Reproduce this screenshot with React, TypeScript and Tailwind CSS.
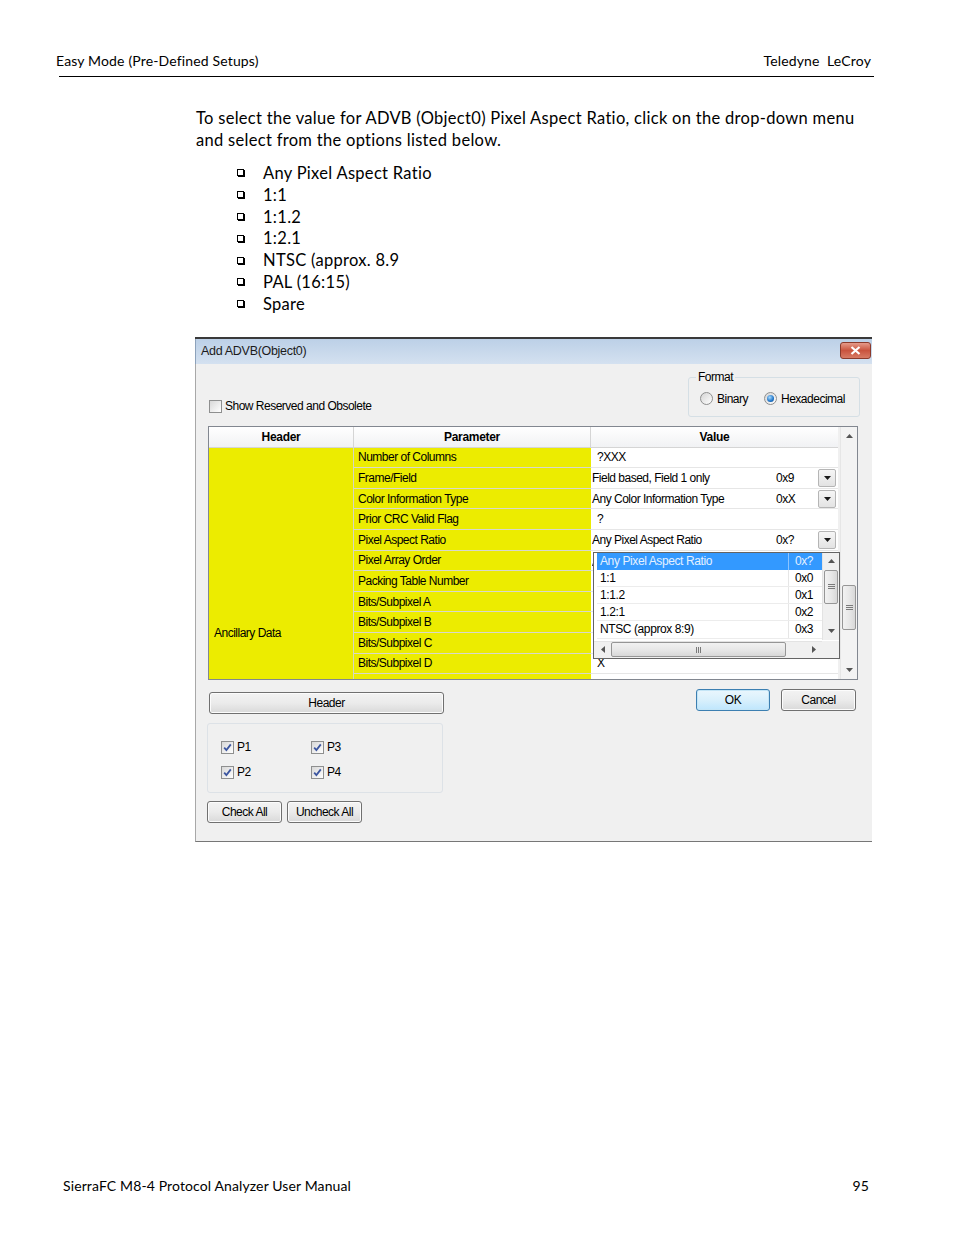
import React from "react";

const dlg = "font-['Liberation_Sans',Arial,sans-serif] text-[12px] tracking-[-0.5px] text-black";
const page = "font-['Lato','Open_Sans',sans-serif] text-black";

function Tri({ dir = "down", color = "#1a1a1a", w = 7, h = 4 }: { dir?: "up" | "down" | "left" | "right"; color?: string; w?: number; h?: number }) {
  if (dir === "down")
    return (
      <svg width={w} height={h} viewBox="0 0 7 4">
        <path d="M0 0 L7 0 L3.5 4 Z" fill={color} />
      </svg>
    );
  if (dir === "up")
    return (
      <svg width={w} height={h} viewBox="0 0 7 4">
        <path d="M0 4 L7 4 L3.5 0 Z" fill={color} />
      </svg>
    );
  if (dir === "left")
    return (
      <svg width={h} height={w} viewBox="0 0 4 7">
        <path d="M4 0 L4 7 L0 3.5 Z" fill={color} />
      </svg>
    );
  return (
    <svg width={h} height={w} viewBox="0 0 4 7">
      <path d="M0 0 L0 7 L4 3.5 Z" fill={color} />
    </svg>
  );
}

function Check({ checked }: { checked?: boolean }) {
  return (
    <span className="w-[13px] h-[13px] shrink-0 border border-[#8e8f8f] bg-linear-to-br from-[#d8d8d8] to-[#ffffff] flex items-center justify-center">
      {checked && (
        <svg width="9" height="9" viewBox="0 0 9 9">
          <path d="M1.2 4.6 L3.4 7 L7.8 1.4" stroke="#3c56a0" strokeWidth="1.8" fill="none" />
        </svg>
      )}
    </span>
  );
}

function Radio({ checked }: { checked?: boolean }) {
  return (
    <span className="w-[13px] h-[13px] shrink-0 rounded-full border border-[#8e8f8f] bg-linear-to-br from-[#d4d4d4] to-[#ffffff] flex items-center justify-center">
      {checked && (
        <span className="w-[7px] h-[7px] rounded-full bg-[radial-gradient(circle_at_40%_35%,#a8dcff,#1f74c8_60%,#0c4787)]" />
      )}
    </span>
  );
}

function Btn({ children, className = "" }: { children: React.ReactNode; className?: string }) {
  return (
    <div
      className={
        "h-[22px] border border-[#707070] rounded-[3px] bg-linear-to-b from-[#f3f3f3] via-[#ebebeb] to-[#d9d9d9] flex items-center justify-center shadow-[inset_0_0_0_1px_#fcfcfc] " +
        className
      }
    >
      {children}
    </div>
  );
}

function Grip() {
  return (
    <div className="flex flex-col gap-[1px] items-center">
      <span className="w-[7px] h-px bg-[#7a7a7a]" />
      <span className="w-[7px] h-px bg-[#7a7a7a]" />
      <span className="w-[7px] h-px bg-[#7a7a7a]" />
    </div>
  );
}

function GripV() {
  return (
    <div className="flex flex-row gap-[1px] items-center">
      <span className="w-px h-[6px] bg-[#7a7a7a]" />
      <span className="w-px h-[6px] bg-[#7a7a7a]" />
      <span className="w-px h-[6px] bg-[#7a7a7a]" />
    </div>
  );
}

const params = [
  "Number of Columns",
  "Frame/Field",
  "Color Information Type",
  "Prior CRC Valid Flag",
  "Pixel Aspect Ratio",
  "Pixel Array Order",
  "Packing Table Number",
  "Bits/Subpixel A",
  "Bits/Subpixel B",
  "Bits/Subpixel C",
  "Bits/Subpixel D",
];

type Val = { text: string; code?: string; pad?: boolean; frag?: boolean };
const values: Val[] = [
  { text: "?XXX", pad: true },
  { text: "Field based, Field 1 only", code: "0x9" },
  { text: "Any Color Information Type", code: "0xX" },
  { text: "?", pad: true },
  { text: "Any Pixel Aspect Ratio", code: "0x?" },
  { text: "", frag: true },
  { text: "" },
  { text: "" },
  { text: "" },
  { text: "" },
  { text: "X", pad: true },
];

const options = [
  { name: "Any Pixel Aspect Ratio", code: "0x?" },
  { name: "1:1", code: "0x0" },
  { name: "1:1.2", code: "0x1" },
  { name: "1.2:1", code: "0x2" },
  { name: "NTSC (approx 8:9)", code: "0x3" },
];

function DropBtn() {
  return (
    <div className="w-[18px] h-[18px] mr-[2px] border border-[#b5b5b5] rounded-[2px] bg-linear-to-b from-[#f6f6f6] to-[#e3e3e3] flex items-center justify-center">
      <Tri dir="down" w={7} h={4} />
    </div>
  );
}

function Table() {
  return (
    <div className="w-[650px] h-[254px] border border-[#828790] bg-[#f0f0f0] flex overflow-hidden">
      <div className="flex flex-col w-[629px]">
        <div className="h-[21px] flex bg-linear-to-b from-[#ffffff] to-[#f1f2f4] border-b border-[#d5d5d5] font-bold tracking-[-0.3px]">
          <div className="w-[145px] border-r border-[#d5d5d5] flex items-center justify-center">Header</div>
          <div className="w-[237px] border-r border-[#d5d5d5] flex items-center justify-center">Parameter</div>
          <div className="flex-1 flex items-center justify-center">Value</div>
        </div>
        <div className="flex-1 flex overflow-hidden">
          <div className="w-[145px] bg-[#ecec00] border-r border-[#d6d6c0] pl-[5px] pt-[176px]">
            <div className="h-[18px] flex items-center">Ancillary Data</div>
          </div>
          <div className="w-[237px] flex flex-col bg-[#f0f0f0]">
            {params.map((p) => (
              <div key={p} className="h-[20.6px] shrink-0 bg-[#ecec00] border-b border-[#d8d8cc] pl-[4px] flex items-center">
                {p}
              </div>
            ))}
            <div className="h-[10px] shrink-0 bg-[#ecec00]" />
          </div>
          <div className="flex-1 flex flex-col bg-white">
            {values.map((v, i) => (
              <div key={i} className="h-[20.6px] shrink-0 border-b border-[#e6e6e6] flex items-center">
                {v.code ? (
                  <>
                    <span className="w-[185px] pl-[1px] whitespace-nowrap overflow-hidden">{v.text}</span>
                    <span className="flex-1">{v.code}</span>
                    <DropBtn />
                  </>
                ) : v.frag ? (
                  <svg width="4" height="10" viewBox="0 0 4 10" className="ml-[1px] mt-[4px]">
                    <path d="M0.5 9 L3 1" stroke="#222" strokeWidth="1" />
                  </svg>
                ) : (
                  <span className={v.pad ? "pl-[6px]" : "pl-[1px]"}>{v.text}</span>
                )}
              </div>
            ))}
            <div className="h-[10px] shrink-0" />
          </div>
        </div>
      </div>
      <div className="flex-1 pl-[2px] flex">
        <div className="flex-1 flex flex-col bg-[#f3f3f3] border-l border-[#e6e6e6]">
          <div className="h-[18px] flex items-center justify-center">
            <Tri dir="up" color="#555" w={7} h={4} />
          </div>
          <div className="flex-1 flex flex-col">
            <div className="mt-[140px] h-[45px] mx-[1px] border border-[#969696] rounded-[2px] bg-linear-to-r from-[#f2f2f2] via-[#e8e8e8] to-[#d8d8d8] flex items-center justify-center">
              <Grip />
            </div>
          </div>
          <div className="h-[18px] flex items-center justify-center">
            <Tri dir="down" color="#555" w={7} h={4} />
          </div>
        </div>
      </div>
    </div>
  );
}

function Popup() {
  return (
    <div className="absolute left-[397px] top-[188px] w-[247px] h-[107px] border border-[#646464] bg-white flex flex-col tracking-[-0.4px]">
      <div className="h-[87px] flex">
        <div className="flex-1 pl-[3px] flex flex-col">
          {options.map((o, i) => (
            <div
              key={o.name}
              className={
                "h-[17.2px] shrink-0 flex " +
                (i === 0 ? "bg-[#3399ff] text-[#e4f0ff]" : "border-b border-[#ececec]")
              }
            >
              <span className={"w-[192px] pl-[3px] flex items-center whitespace-nowrap " + (i === 0 ? "border-r border-[#8cc4ff]" : "border-r border-[#e6e6e6]")}>
                {o.name}
              </span>
              <span className="flex-1 pl-[6px] flex items-center">{o.code}</span>
            </div>
          ))}
        </div>
        <div className="w-[17px] bg-[#f0f0f0] border-l border-[#e3e3e3] flex flex-col">
          <div className="h-[17px] flex items-center justify-center">
            <Tri dir="up" color="#555" />
          </div>
          <div className="h-[34px] mx-[1px] border border-[#969696] rounded-[2px] bg-linear-to-r from-[#f2f2f2] via-[#e8e8e8] to-[#d8d8d8] flex items-center justify-center">
            <Grip />
          </div>
          <div className="flex-1" />
          <div className="h-[17px] flex items-center justify-center">
            <Tri dir="down" color="#555" />
          </div>
        </div>
      </div>
      <div className="h-[17px] mt-[1px] flex">
        <div className="flex-1 bg-[#f0f0f0] border-t border-[#e3e3e3] flex items-center">
          <div className="w-[17px] h-full flex items-center justify-center">
            <Tri dir="left" color="#555" />
          </div>
          <div className="w-[175px] h-[15px] border border-[#969696] rounded-[2px] bg-linear-to-b from-[#f2f2f2] via-[#e8e8e8] to-[#d8d8d8] flex items-center justify-center">
            <GripV />
          </div>
          <div className="flex-1" />
          <div className="w-[17px] h-full flex items-center justify-center">
            <Tri dir="right" color="#555" />
          </div>
        </div>
        <div className="w-[17px] bg-[#f0f0f0]" />
      </div>
    </div>
  );
}

function Dialog() {
  return (
    <div className={"ml-[195px] w-[677px] h-[505px] flex flex-col " + dlg}>
      <div className="h-[2px] bg-[#3a3a3a]" />
      <div className="h-[25px] bg-linear-to-b from-[#bcd0e7] to-[#d4e1f0] border-l border-[#8da2bb] flex items-center justify-between pl-[5px] pr-[1px]">
        <span className="text-[12.5px] text-[#1b1b1b] tracking-[-0.3px]">Add ADVB(Object0)</span>
        <div className="w-[31px] h-[17px] mb-[2px] rounded-[3px] border border-[#8b3a2c] bg-linear-to-b from-[#e59a8a] via-[#c9533e] to-[#d77a64] flex items-center justify-center">
          <svg width="11" height="9" viewBox="0 0 11 9">
            <path d="M1.5 1 L9.5 8 M9.5 1 L1.5 8" stroke="#ffffff" strokeWidth="2.2" />
          </svg>
        </div>
      </div>
      <div className="flex-1 relative bg-[#f0f0f0] border-l border-[#a8a8a8] border-b border-b-[#767676] px-[12px]">
        <div className="h-[62px] flex justify-between items-start">
          <div className="mt-[36px] ml-[1px] flex items-center gap-[3px] h-[13px]">
            <Check />
            <span>Show Reserved and Obsolete</span>
          </div>
          <div className="mt-[13px] w-[172px] h-[40px] relative border border-[#d5dfe5] rounded-[3px] flex items-center pl-[11px] pt-[4px]">
            <span className="absolute left-[7px] -top-[8px] bg-[#f0f0f0] px-[2px] leading-[14px]">Format</span>
            <div className="flex items-center gap-[4px]">
              <Radio />
              <span>Binary</span>
            </div>
            <div className="flex items-center gap-[4px] ml-[16px]">
              <Radio checked />
              <span>Hexadecimal</span>
            </div>
          </div>
        </div>
        <Table />
        <div className="mt-[9px] flex justify-between items-start">
          <Btn className="mt-[3px] ml-[1px] w-[235px]">Header</Btn>
          <div className="flex gap-[11px] mr-[4px]">
            <div className="w-[74px] h-[22px] border border-[#3c7fb1] rounded-[3px] bg-linear-to-b from-[#eaf6fd] via-[#d9f0fc] to-[#bee6fd] flex items-center justify-center shadow-[inset_0_0_0_1px_#c4e5f6]">
              OK
            </div>
            <Btn className="w-[75px]">Cancel</Btn>
          </div>
        </div>
        <div className="mt-[9px] -ml-[1px] w-[236px] h-[70px] border border-[#dde2e7] rounded-[3px] pl-[13px] pt-[17px]">
          <div className="grid grid-cols-[90px_90px] gap-y-[12px]">
            <div className="flex items-center gap-[3px] h-[13px]"><Check checked /><span>P1</span></div>
            <div className="flex items-center gap-[3px] h-[13px]"><Check checked /><span>P3</span></div>
            <div className="flex items-center gap-[3px] h-[13px]"><Check checked /><span>P2</span></div>
            <div className="flex items-center gap-[3px] h-[13px]"><Check checked /><span>P4</span></div>
          </div>
        </div>
        <div className="mt-[8px] -ml-[1px] flex gap-[5px]">
          <Btn className="w-[75px]">Check All</Btn>
          <Btn className="w-[75px]">Uncheck All</Btn>
        </div>
        <Popup />
      </div>
    </div>
  );
}

function Bullet({ children }: { children: React.ReactNode }) {
  return (
    <div className="h-[21.8px] flex items-center">
      <span className="w-[26px] flex items-center">
        <span className="w-[7px] h-[7px] border border-black shadow-[1px_1px_0_0_#000]" />
      </span>
      <span>{children}</span>
    </div>
  );
}

export default function App() {
  return (
    <div className={"w-[954px] h-[1235px] bg-white relative flex flex-col " + page}>
      <div className="pt-[52px] pl-[56px] pr-[83px] flex justify-between text-[14px] leading-[18px] tracking-[0.15px]">
        <span>Easy Mode (Pre-Defined Setups)</span>
        <span>Teledyne&nbsp; LeCroy</span>
      </div>
      <div className="mt-[6px] ml-[59px] w-[815px] h-px bg-black" />
      <div className="mt-[30px] ml-[196px] text-[16.5px] leading-[22px] tracking-[0.3px] whitespace-nowrap">
        To select the value for ADVB (Object0) Pixel Aspect Ratio, click on the drop-down menu
        <br />
        and select from the options listed below.
      </div>
      <div className="mt-[11px] ml-[237px] text-[16.5px] leading-[22px] tracking-[0.3px]">
        <Bullet>Any Pixel Aspect Ratio</Bullet>
        <Bullet>1:1</Bullet>
        <Bullet>1:1.2</Bullet>
        <Bullet>1:2.1</Bullet>
        <Bullet>NTSC (approx. 8.9</Bullet>
        <Bullet>PAL (16:15)</Bullet>
        <Bullet>Spare</Bullet>
      </div>
      <div className="mt-[22px]">
        <Dialog />
      </div>
      <div className="flex-1" />
      <div className="pb-[40px] pl-[63px] pr-[85px] flex justify-between text-[14px] leading-[18px] tracking-[0.12px]">
        <span>SierraFC M8-4 Protocol Analyzer User Manual</span>
        <span>95</span>
      </div>
    </div>
  );
}
